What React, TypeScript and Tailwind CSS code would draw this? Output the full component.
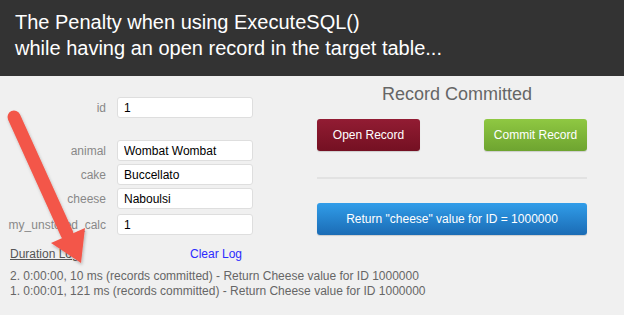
import React from "react";

type Field = { label: string; value: string; className?: string };

const fields: Field[] = [
  { label: "animal", value: "Wombat Wombat" },
  { label: "cake", value: "Buccellato" },
  { label: "cheese", value: "Naboulsi" },
  { label: "my_unstored_calc", value: "1", className: "mt-[2px]" },
];

const logLines = [
  "2. 0:00:00, 10 ms (records committed) - Return Cheese value for ID 1000000",
  "1. 0:00:01, 121 ms (records committed) - Return Cheese value for ID 1000000",
];

function FieldRow({ label, value, className = "" }: Field) {
  return (
    <div className={`flex items-center ${className}`}>
      <label className="w-[106px] text-right text-[12px] text-[#888] pr-0">{label}</label>
      <input
        readOnly
        value={value}
        className="ml-[11px] w-[136px] h-[21px] bg-white border border-[#dedede] rounded-[3px] px-[6px] text-[12px] text-black outline-none"
      />
    </div>
  );
}

function Arrow() {
  return (
    <svg className="absolute left-0 top-0 pointer-events-none" width="624" height="315" viewBox="0 0 624 315">
      <defs>
        <filter id="shadow" x="-20%" y="-20%" width="140%" height="140%">
          <feDropShadow dx="1" dy="2" stdDeviation="1.5" floodColor="#000" floodOpacity="0.25" />
        </filter>
      </defs>
      <g filter="url(#shadow)" fill="#f3574a" stroke="none">
        <line x1="14" y1="117" x2="67" y2="234" stroke="#f3574a" strokeWidth="13" strokeLinecap="round" />
        <polygon points="51,243 85,228 81,263" />
      </g>
    </svg>
  );
}

export default function App() {
  return (
    <div className="relative w-[624px] h-[315px] overflow-hidden bg-[#f0f0f0] font-['Liberation_Sans',Arial,sans-serif]">
      {/* Title banner */}
      <div className="h-[76px] bg-[#333333] px-[15px] pt-[9px] text-white text-[20px] leading-[26px]">
        <div>The Penalty when using ExecuteSQL()</div>
        <div>while having an open record in the target table...</div>
      </div>

      <div className="flex">
        {/* Left: record fields + log */}
        <div className="w-[300px]">
          <div className="pt-[21px] flex flex-col gap-[3px]">
            <FieldRow label="id" value="1" className="mb-[19px]" />
            {fields.map((f) => (
              <FieldRow key={f.label} {...f} />
            ))}
          </div>

          <div className="mt-[12px] pl-[10px] flex text-[12px] leading-[15px]">
            <span className="w-[180px] text-[#555] underline">Duration Log</span>
            <a className="text-[#2b2bff] cursor-pointer">Clear Log</a>
          </div>

          <div className="mt-[7px] pl-[10px] w-[600px] text-[12px] leading-[15px] text-[#666]">
            {logLines.map((l) => (
              <div key={l}>{l}</div>
            ))}
          </div>
        </div>

        {/* Right: actions */}
        <div className="ml-[17px] w-[270px]">
          <div className="pt-[7px] pl-[10px] text-center text-[18px] leading-[22px] text-[#666]">Record Committed</div>
          <div className="mt-[14px] flex justify-between">
            <button className="w-[103px] h-[32px] rounded-[3px] bg-gradient-to-b from-[#921c33] to-[#741022] text-white text-[12px] shadow-[0_1px_1px_rgba(0,0,0,0.15)]">
              Open Record
            </button>
            <button className="w-[103px] h-[32px] rounded-[3px] bg-gradient-to-b from-[#8fc842] to-[#6ea430] text-white text-[12px] shadow-[0_1px_1px_rgba(0,0,0,0.15)]">
              Commit Record
            </button>
          </div>
          <div className="mt-[26px] h-[2px] bg-[#e2e2e2]" />
          <button className="mt-[24px] w-[270px] h-[32px] rounded-[3px] bg-gradient-to-b from-[#319de9] to-[#1b6cb5] text-white text-[12px] shadow-[0_1px_1px_rgba(0,0,0,0.15)]">
            Return "cheese" value for ID = 1000000
          </button>
        </div>
      </div>

      <Arrow />
    </div>
  );
}
